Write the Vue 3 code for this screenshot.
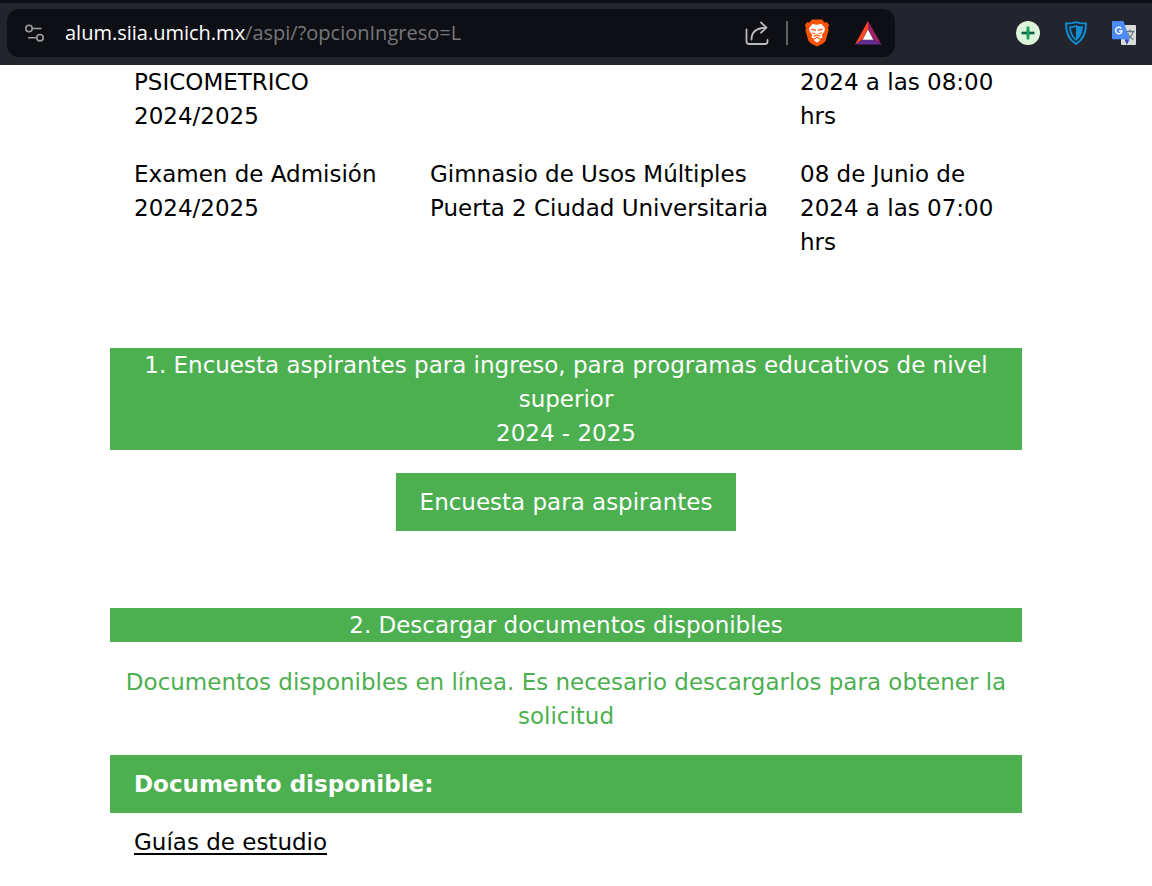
<script setup>
const exams = [
  { name: 'PSICOMETRICO 2024/2025', place: '', date: '2024 a las 08:00 hrs' },
  {
    name: 'Examen de Admisión 2024/2025',
    place: 'Gimnasio de Usos Múltiples Puerta 2 Ciudad Universitaria',
    date: '08 de Junio de 2024 a las 07:00 hrs',
  },
]
</script>

<template>
  <header class="toolbar">
    <div class="address">
      <button class="icon" type="button" aria-label="Información del sitio">
        <svg width="24" height="24" viewBox="0 0 24 24" fill="none" stroke="#9b9c9f" stroke-width="1.6">
          <circle cx="6" cy="7.5" r="3.200" />
          <path d="M9.500 7.500H18.500M5 16.700H13.500" />
          <circle cx="17" cy="16.700" r="3.200" />
        </svg>
      </button>
      <a class="url" href="#"><span class="host">alum.siia.umich.mx</span>/aspi/?opcionIngreso=L</a>
      <div class="actions">
        <button class="icon" type="button" aria-label="Compartir">
          <svg width="26" height="26" viewBox="0 0 26 26" fill="none" stroke="#b9babc" stroke-width="1.8" stroke-linecap="round" stroke-linejoin="round">
            <path d="M3.500 9.500V21.500Q3.500 24 6 24H22Q24.500 24 24.500 21.500V20" />
            <path d="M8.500 19.500C8.500 12.500 13 8 23 7.600M18 2.500L23.500 7.600L18 12.700" />
          </svg>
        </button>
        <span class="divider"></span>
        <button class="icon" type="button" aria-label="Brave Shields">
          <svg width="26" height="28" viewBox="0 0 26 28">
            <path fill="#fb5408" d="M8 .5H18L20.500 3.500L23 3.200L25 6L24 9L24.600 11L21.500 22L19 24.500L13 27.500L7 24.500L4.500 22L1.400 11L2 9L1 6L3 3.200L5.500 3.500Z" />
            <path fill="#fff" d="M8.500 5L13 5.800L17.500 5L21 9.200L20.300 12.500L17.800 15.800L18.500 18.300L16.400 19.800L13 17.400L9.600 19.800L7.500 18.300L8.200 15.800L5.700 12.500L5 9.200Z" />
            <path fill="none" stroke="#fb5408" stroke-width="1.200" d="M7.300 10.300L11 10.900L11.800 12M18.700 10.300L15 10.900L14.200 12M8.300 13.700L11.300 14.800M17.700 13.700L14.700 14.800M9.500 17.300L13 15.900L16.500 17.300" />
            <path fill="#fff" d="M13 18.800L16.300 21L13 23.700L9.700 21Z" />
          </svg>
        </button>
        <button class="icon rewards" type="button" aria-label="Brave Rewards">
          <svg width="28" height="24" viewBox="0 0 28 24">
            <path fill="#ff4724" d="M14 0V8.500L8.700 18.500L1 23.500Z" />
            <path fill="#9e1f63" d="M14 0L27.500 23.500L19.300 18.500L14 8.500Z" />
            <path fill="#662d91" d="M1 23.500L8.700 18.500H19.300L27.500 23.500Z" />
            <path fill="#fff" d="M14 8.500L19.300 18.700H8.700Z" />
          </svg>
        </button>
      </div>
    </div>
    <div class="extensions">
      <button class="icon" type="button" aria-label="Agregar">
        <svg width="24" height="24" viewBox="0 0 24 24">
          <circle cx="12" cy="12" r="12" fill="#dcf4d9" />
          <path d="M12 5.500V18.500" stroke="#14a35a" stroke-width="2.800" />
          <path d="M5.500 12H18.500" stroke="#086047" stroke-width="2.600" />
          <path d="M12 9V15" stroke="#14a35a" stroke-width="2.800" />
        </svg>
      </button>
      <button class="icon" type="button" aria-label="Protección">
        <svg width="24" height="24" viewBox="0 0 24 24">
          <path d="M12 1.200C15 2.500 18.500 2.500 22 2.500C22 12 19 19 12 22.800C5 19 2 12 2 2.500C5.500 2.500 9 2.500 12 1.200Z" fill="#1d252f" stroke="#118bd3" stroke-width="2" />
          <path d="M12 5C14 6 16 6.200 18 6.200C17.700 12 16 15.500 12 18.700C8 15.500 6.300 12 6 6.200C8 6.200 10 6 12 5Z" fill="#1d252f" stroke="#118bd3" stroke-width="1.800" />
          <path d="M12 5C14 6 16 6.200 18 6.200C17.700 12 16 15.500 12 18.700Z" fill="#118bd3" />
        </svg>
      </button>
      <button class="icon" type="button" aria-label="Traductor">
        <svg width="24" height="24" viewBox="0 0 24 24">
          <rect x="9" y="4" width="15" height="20" rx="1" fill="#dadada" />
          <path d="M13.500 10.500H22.500M18 8.500V10.500M21 10.500C20.500 14 17.500 17 14 18M15.500 12C17 15.500 19 17.500 21.500 18.500" fill="none" stroke="#607d83" stroke-width="1.300" />
          <path d="M12.500 18.300H17.500L14.800 24Z" fill="#3747b5" />
          <path d="M1 0H11.500L17.500 18.300H1Q0 18.300 0 17.300V1Q0 0 1 0Z" fill="#4c8bf5" />
          <path d="M9.300 7.500A3.200 3.200 0 1 0 10 10H7" fill="none" stroke="#fff" stroke-width="1.500" />
        </svg>
      </button>
    </div>
  </header>

  <main class="page">
    <table class="exams">
      <tbody>
        <tr v-for="exam in exams" :key="exam.name">
          <td class="name">{{ exam.name }}</td>
          <td class="place">{{ exam.place }}</td>
          <td class="date">{{ exam.date }}</td>
        </tr>
      </tbody>
    </table>

    <section class="block">
      <h2 class="banner">1. Encuesta aspirantes para ingreso, para programas educativos de nivel superior<br />2024 - 2025</h2>
      <button class="survey" type="button">Encuesta para aspirantes</button>
    </section>

    <section class="block">
      <h2 class="banner">2. Descargar documentos disponibles</h2>
      <p class="note">Documentos disponibles en línea. Es necesario descargarlos para obtener la solicitud</p>
      <table class="documents">
        <thead>
          <tr><th>Documento disponible:</th></tr>
        </thead>
        <tbody>
          <tr><td><a href="#">Guías de estudio</a></td></tr>
        </tbody>
      </table>
    </section>
  </main>
</template>

<style>
body {
  margin: 0;
  background: #fff;
}
</style>

<style scoped>
.toolbar {
  display: flex;
  align-items: center;
  justify-content: space-between;
  padding: 6px 16px 8px 7px;
  border-top: 3px solid #0e0f14;
  background: #22252d;
}
.address {
  display: flex;
  flex: 0 1 888px;
  align-items: center;
  box-sizing: border-box;
  height: 48px;
  padding: 0 13px 0 16px;
  border-radius: 12px;
  background: #0e0f14;
}
.icon {
  display: flex;
  padding: 0;
  border: 0;
  background: none;
}
.url {
  flex: 1;
  margin-left: 18px;
  color: #76777a;
  font: 20px/28px "Open Sans", "Noto Sans", sans-serif;
  text-decoration: none;
  white-space: nowrap;
}
.host {
  color: #fff;
}
.actions {
  display: flex;
  align-items: center;
}
.divider {
  width: 2px;
  height: 24px;
  margin: 0 16px 0 17px;
  background: #626367;
}
.rewards {
  margin-left: 24px;
}
.extensions {
  display: flex;
  gap: 24px;
}
.page {
  padding: 0 130px 15px 110px;
  color: #000;
  font: 23px/34px Verdana, "DejaVu Sans", sans-serif;
}
table {
  width: 100%;
  border-collapse: collapse;
}
td,
th {
  padding: 12px 24px;
  text-align: left;
  vertical-align: top;
}
.exams {
  table-layout: fixed;
}
.exams tr:first-child td {
  padding-top: 0;
}
.exams td {
  padding-right: 0;
}
.name {
  width: 272px;
}
.place {
  width: 346px;
}
.block {
  margin-top: 77px;
}
.banner {
  margin: 0;
  background: #4caf50;
  color: #fff;
  font-size: 23px;
  font-weight: 400;
  text-align: center;
}
.survey {
  display: block;
  margin: 23px auto 0;
  padding: 12px 24px;
  border: 0;
  background: #4caf50;
  color: #fff;
  font: inherit;
}
.note {
  margin: 23px 0 22px;
  color: #4caf50;
  text-align: center;
}
th {
  background: #4caf50;
  color: #fff;
}
.documents a {
  color: #000;
  text-decoration-thickness: 2px;
  text-underline-offset: 3px;
}
</style>
